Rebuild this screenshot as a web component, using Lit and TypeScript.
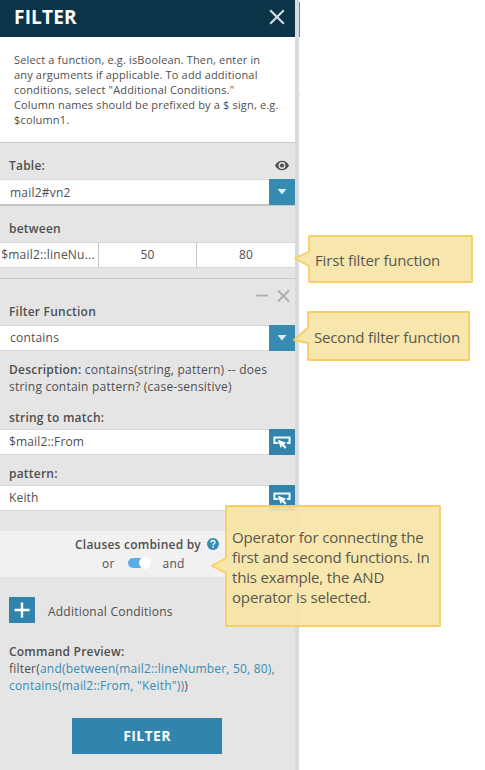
import { LitElement, html, css, svg } from "lit";
import { customElement, property } from "lit/decorators.js";

@customElement("pick-button")
class PickButton extends LitElement {
  @property() kind = "drop";
  static styles = css`
    :host { display: block; width: 26px; height: 26px; background: #368bb3; flex: none; }
    :host([kind="pick"]) { background: #3185ad; }
    svg { display: block; }
  `;
  render() {
    return html`<svg width="26" height="26" viewBox="0 0 26 26">
      ${this.kind === "drop"
        ? svg`<path d="M8.6 10h8.8L13 15.4z" fill="#dfecf3" />`
        : svg`<path d="M9.500 14H5.400V8.500h15.200V14H18" fill="none" stroke="#f4f9fb" stroke-width="2" />
            <path d="M9 10.800l8.200 2.900-2.200 1.600 2.500 3-1.600 1.500-2.700-3-1.600 2.200z" fill="#fff" />`}
    </svg>`;
  }
}

@customElement("call-out")
class CallOut extends LitElement {
  @property({ type: Number }) w = 100;
  @property({ type: Number }) h = 50;
  @property() d = "";
  static styles = css`
    :host { position: absolute; display: flex; align-items: center; box-sizing: border-box; color: #595750;
      font: 15px/20px "Open Sans", sans-serif; letter-spacing: -.16px; }
    svg { position: absolute; left: 0; top: 0; overflow: visible; }
    .text { position: relative; white-space: pre; }
  `;
  render() {
    return html`<svg width=${this.w} height=${this.h}>
        <path d=${this.d} fill="#f7e5a6" fill-opacity=".92" stroke="#f6cf65" stroke-width="1.8" stroke-linejoin="round" />
      </svg><div class="text"><slot></slot></div>`;
  }
}

@customElement("app-root")
class AppRoot extends LitElement {
  static styles = css`
    :host { display: block; position: relative; width: 485px; height: 770px; overflow: hidden; background: #fff;
      font: 12px/17px "Open Sans", sans-serif; letter-spacing: .22px; color: #4f4f4f; }
    * { box-sizing: border-box; }
    .panel { width: 299px; height: 770px; border-right: 4px solid #d5dbe0; background: #e5e5e5; display: flex; flex-direction: column; }
    .head { height: 37px; flex: none; background: #0b3448; display: flex; justify-content: space-between; padding: 0 10px 4px 14px; align-items: center; }
    .title { font-size: 19px; line-height: 24px; font-weight: 700; color: #fff; letter-spacing: .2px; }
    .intro { height: 106px; flex: none; background: #fff; border-bottom: 1px solid #c8c8c8; padding: 15px 0 0 14px; font-size: 11px; letter-spacing: .16px; line-height: 15px; white-space: pre; }
    .label { font-weight: 600; height: 17px; flex: none; padding: 0 6px 0 9px; display: flex; justify-content: space-between; align-items: center; }
    .field { height: 26px; flex: none; display: flex; align-items: center; background: #fff; border: solid #d9d9d9; border-width: 1px 0; }
    .field pick-button { margin: -1px 0; }
    .value { flex: 1; padding: 0 0 2px 10px; }
    .value.near { padding-left: 9px; letter-spacing: .15px; }
    .table-label { margin: 14px 0 5px; }
    .table-field { height: 27px; border-bottom: 2px solid #c6c6c6; }
    .table-field .value { padding-bottom: 0; }
    .between-label { margin: 14px 0 5px; }
    .cells { height: 26px; flex: none; display: grid; grid-template-columns: 98px 98px 99px; background: #fff; border: solid #d9d9d9; border-width: 1px 0; line-height: 24px; text-align: center; }
    .cell + .cell { border-left: 1px solid #c6c6c6; }
    .cell { white-space: nowrap; }
    .cell:first-child { padding-right: 2px; }
    .rule { height: 1px; flex: none; background: #c8c8c8; margin-top: 10px; }
    .tools { height: 14px; flex: none; display: flex; justify-content: flex-end; margin-top: 10px; padding-right: 5px; }
    .fn-label { margin: 0 0 5px; }
    .desc { padding-left: 9px; margin-top: 10px; }
    .match-label { margin: 14px 0 3px; }
    .pattern-label { margin: 10px 0 3px; }
    .row { display: flex; height: 17px; white-space: pre; }
    b { font-weight: 600; }
    .band { height: 46px; flex: none; margin-top: 20px; background: #f1f1f1; padding-top: 4px; }
    .clauses { display: flex; align-items: center; gap: 6px; padding-left: 75px; height: 18px; }
    .choice { display: flex; align-items: center; height: 20px; padding-left: 102px; }
    .switch { width: 22px; height: 10px; border-radius: 5px; background: #5badea; margin: 0 13px 0 13px; display: flex; align-items: center; justify-content: flex-end; }
    .knob { width: 12px; height: 12px; border-radius: 50%; background: #fff; flex: none; margin-right: -1px; }
    .add { display: flex; height: 26px; flex: none; margin-top: 20px; padding-left: 9px; gap: 13px; }
    .plus { width: 26px; height: 26px; background: #3185ad; }
    .add-text { padding-top: 6px; }
    .preview { padding-left: 9px; margin-top: 20px; letter-spacing: .2px; }
    .code { color: #368bb3; }
    .go { width: 150px; height: 36px; flex: none; margin: 24px 0 0 72px; background: #3185ad; color: #fff; font-weight: 700; font-size: 14px; line-height: 36px; text-align: center; letter-spacing: .35px; }
    svg { display: block; flex: none; }
    .edge { position: absolute; left: 299px; top: 2px; width: 1px; height: 35px; background: #4a8db5; }
    .tick { position: absolute; left: 299px; top: 94px; width: 1px; height: 1px; background: #ccc; }
    .one { left: 294px; top: 235px; width: 179px; height: 48px; padding: 1px 0 0 21px; }
    .two { left: 293px; top: 311px; width: 177px; height: 50px; padding: 1px 0 0 21px; }
    .three { left: 211px; top: 505px; width: 230px; height: 122px; padding: 1px 0 0 21px; }
  `;
  render() {
    return html`
      <div class="panel">
        <div class="head"><span class="title">FILTER</span>
          <svg width="16" height="16" viewBox="0 0 16 16"><path d="M1.2 1.2l13.6 13.6M14.8 1.2L1.2 14.8" stroke="#d3dce0" stroke-width="2.2" /></svg></div>
        <div class="intro">Select a function, e.g. isBoolean. Then, enter in
any arguments if applicable. To add additional
conditions, select "Additional Conditions."
Column names should be prefixed by a $ sign, e.g.
$column1.</div>
        <div class="label table-label">Table:
          <svg width="14" height="11" viewBox="0 0 14 11"><path d="M0 5.5C1.5 2.3 4 .7 7 .7s5.500 1.600 7 4.800c-1.500 3.200-4 4.800-7 4.800S1.500 8.700 0 5.500z" fill="#4f4f4f" /><circle cx="7" cy="5.500" r="3.400" fill="#e5e5e5" /><circle cx="7" cy="5.500" r="2.100" fill="#4f4f4f" /></svg></div>
        <div class="field table-field"><span class="value">mail2#vn2</span><pick-button kind="drop"></pick-button></div>
        <div class="label between-label">between</div>
        <div class="cells"><div class="cell">$mail2::lineNu...</div><div class="cell">50</div><div class="cell">80</div></div>
        <div class="rule"></div>
        <div class="tools"><svg width="34" height="14" viewBox="0 0 34 14"><path d="M0 6.700h12M22 1.500l11 11M33 1.500l-11 11" stroke="#adadad" stroke-width="1.800" /></svg></div>
        <div class="label fn-label">Filter Function</div>
        <div class="field"><span class="value">contains</span><pick-button kind="drop"></pick-button></div>
        <div class="desc">
          <div class="row"><b>Description:</b><span> contains(string, pattern) -- does</span></div>
          <div class="row">string contain pattern? (case-sensitive)</div>
        </div>
        <div class="label match-label">string to match:</div>
        <div class="field"><span class="value near">$mail2::From</span><pick-button kind="pick"></pick-button></div>
        <div class="label pattern-label">pattern:</div>
        <div class="field"><span class="value near">Keith</span><pick-button kind="pick"></pick-button></div>
        <div class="band">
          <div class="clauses"><b>Clauses combined by</b>
            <svg width="12" height="12" viewBox="0 0 12 12"><circle cx="6" cy="6" r="6" fill="#368bb3" /><path d="M4 4.500C4 1.900 8 1.900 8 4.300 8 5.700 6.100 5.700 6.100 7.300M6.100 8.300v1.500" fill="none" stroke="#fff" stroke-width="1.400" /></svg></div>
          <div class="choice">or<span class="switch"><span class="knob"></span></span><span>and</span></div>
        </div>
        <div class="add"><svg class="plus" viewBox="0 0 26 26"><path d="M5.500 13h15M13 5.500v15" stroke="#fff" stroke-width="2.400" /></svg><span class="add-text">Additional Conditions</span></div>
        <div class="preview">
          <div class="row"><b>Command Preview:</b></div>
          <div class="row"><span>filter(</span><span class="code">and(between(mail2::lineNumber, 50, 80),</span></div>
          <div class="row"><span class="code">contains(mail2::From, "Keith"))</span><span>)</span></div>
        </div>
        <div class="go">FILTER</div>
      </div>
      <div class="edge"></div><div class="tick"></div>
      <call-out class="one" w="179" h="48" d="M15 1H178V47H15V31L1 23.500L15 16.500Z">First filter function</call-out>
      <call-out class="two" w="177" h="50" d="M15 1H176V49H15V32L1 29L15 16.500Z">Second filter function</call-out>
      <call-out class="three" w="230" h="122" d="M15 1H229V121H15V68L1 61L15 53Z">Operator for connecting the
first and second functions. In
this example, the AND
operator is selected.</call-out>
    `;
  }
}
